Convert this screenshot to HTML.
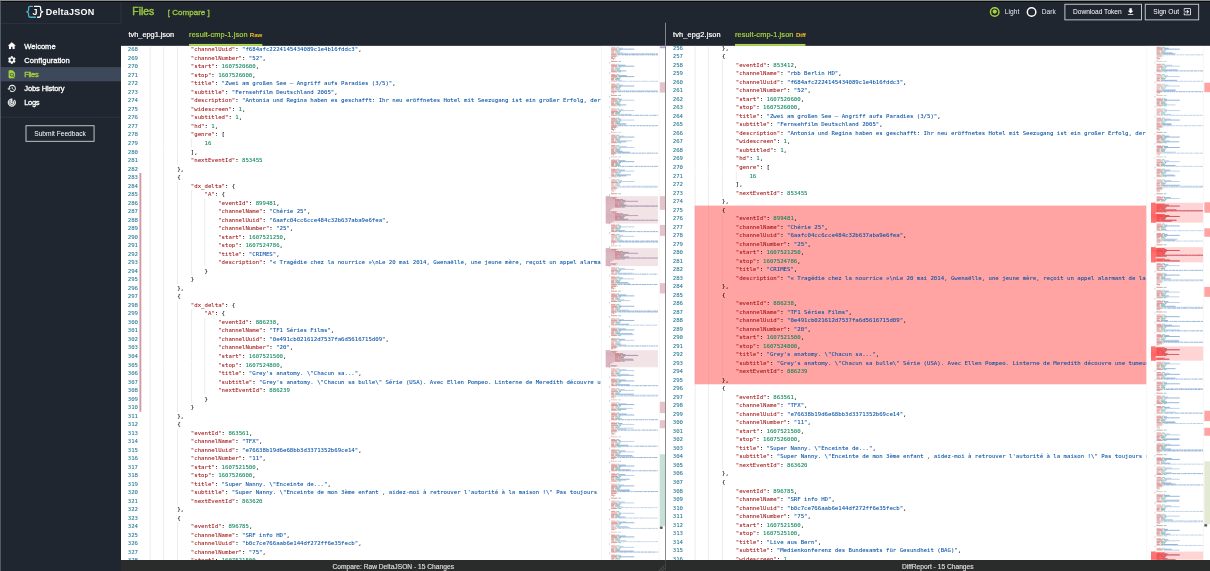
<!DOCTYPE html>
<html lang="en"><head><meta charset="utf-8"><title>DeltaJSON - Files</title>
<style>
*{box-sizing:border-box;margin:0;padding:0}
html,body{width:1210px;height:571px;overflow:hidden;background:#1f262f}
body{font-family:"Liberation Sans",Arial,sans-serif;color:#fff}
#root{position:absolute;left:0;top:0;width:2560px;height:1208px;transform:scale(0.47265625);transform-origin:0 0;filter:blur(.4px);background:#1f262f;overflow:hidden}
#root div,#root span,#root i,#root u,#root pre,#root svg{position:absolute}
.side{left:0;top:0;width:256px;height:1208px;background:#1f262f}
.shead{left:0;top:0;width:257px;height:51px;border-bottom:2px solid #2b3441;border-right:2px solid #2b3441}
.logo{left:54px;top:9px}
.brand{left:97px;top:13px;font-weight:bold;font-size:19px;letter-spacing:.55px;line-height:24px;white-space:nowrap}
.nav{left:0;width:256px;height:30px}
.nav.sel{background:#3d495a}
.nav .ic{left:15px;top:5px}
.nav span{left:51.3px;top:.5px;line-height:30px;font-size:16px;white-space:nowrap;-webkit-text-stroke:.6px #fff}
.nav.sel span{color:#a5d23e;-webkit-text-stroke:.6px #a5d23e}
.sdiv{left:0;top:247px;width:256px;height:2px;background:#2b3643}
.fb{left:54px;top:265px;width:146px;height:35px;border:2px solid #c9ccd0;font-size:14px;line-height:31px;text-align:center;color:#fff}
.title{left:280px;top:11px;font-size:22px;line-height:28px;color:#9cc842;-webkit-text-stroke:.85px #9cc842}
.cmp{left:355px;top:15px;font-size:17px;line-height:24px;color:#9cc842;white-space:nowrap;-webkit-text-stroke:.65px #9cc842}
.rad{width:21px;height:21px;border-radius:50%;border:3.3px solid #fff;top:14.5px}
.rad.on{border-color:#a5d23e}
.rad.on::after{content:"";position:absolute;left:2.7px;top:2.7px;width:9px;height:9px;border-radius:50%;background:#a5d23e}
.rl{top:14px;font-size:14px;line-height:22px;color:#e8eaed}
.btn{top:8px;height:35px;border:2px solid #c9ccd0;font-size:14px;line-height:31px;color:#fff;white-space:nowrap}
.btn span{top:0}
.tab{top:54px;font-size:15.5px;line-height:40px;white-space:nowrap;color:#fff;-webkit-text-stroke:.45px #fff}
.tab.act{letter-spacing:.3px;color:#a5d23e;-webkit-text-stroke:.45px #a5d23e}
.tag{top:53.5px;font-size:13px;letter-spacing:-.2px;font-weight:bold;line-height:40px;color:#f2bf2a}
.ul{top:93px;height:4px;background:#aad946}
.ed{top:97px;height:1088px;width:1152px;background:#fff;overflow:hidden}
.code{left:0;top:0;height:1088px;overflow:hidden}
.ln{left:0;height:18px;width:2000px}
.ln u{left:0;top:0;width:36px;text-align:right;text-decoration:none;color:#237893;font:12px/18px "DejaVu Sans Mono","Liberation Mono",monospace}
.ln pre{left:61px;top:0;font:12px/18px "DejaVu Sans Mono","Liberation Mono",monospace;color:#000;white-space:pre}
.ln i{top:0;width:1px;height:18px;background:#d8d8d8}
.redbg{left:61px;width:2000px;background:#ffa3a3}
.ln.rd i{background:#e89a9a}
.ln b{font-weight:normal;-webkit-text-stroke:.13px currentColor}
.ln pre,.ln u{-webkit-text-stroke:.13px currentColor}
.k{color:#a31515}.s{color:#0451a5}.n{color:#098658}
.bar{left:39px;width:4px;background:#cf9aa6}
.mm{top:0;width:111px;height:1088px;background:#fff}
.gap{top:0;width:10px;height:1088px;background:#fff;border-left:1px solid #ececec}
.rul{top:0;width:14px;height:1088px;background:#fff;border-left:1px solid #ededed}
.rul i{left:1px;width:13px}
.rul i.sq{left:1px;width:6px;height:5px;background:#5a5a5a}
.split{left:1407px;top:48px;width:2px;height:1160px;background:#8a8a8a}
.foot{top:1185px;height:23px;background:#2b2b2b;color:#e2e2e2;font-size:14.1px;line-height:26px;text-align:center;-webkit-text-stroke:.25px #e2e2e2}
.topg{left:0;top:0;width:2560px;height:2px;background:#9a9a9a}
.topb{left:0;top:2px;width:2560px;height:2px;background:#06080b}
.leftg{left:0;top:2px;width:2px;height:1206px;background:#565d6b}
</style></head>
<body>
<div id="root">
<div class="side">
 <div class="shead"><svg class=logo width="40" height="32" viewBox="0 0 40 32">
<path d="M14.5 4.5H9.5Q6.5 4.5 6.5 7.5V12.2Q6.5 14.8 2.6 16Q6.5 17.2 6.5 19.8V24.5Q6.5 27.5 9.5 27.5H21" fill="none" stroke="#4fb6c6" stroke-width="2.7" stroke-linejoin="round" stroke-linecap="round"/>
<path d="M19 4.5H29Q32 4.5 32 7.5V12.2Q32 14.8 36.4 16Q32 17.2 32 19.8V24.5Q32 27.5 29 27.5H25.5" fill="none" stroke="#fff" stroke-width="2.7" stroke-linejoin="round" stroke-linecap="round"/>
<text x="20" y="23" text-anchor="middle" font-family="'Liberation Sans', sans-serif" font-weight="bold" font-size="19" fill="#fff">J</text>
</svg><span class="brand">DeltaJSON</span></div>
 <div class="nav" style="top:82px"><svg class=ic width="20" height="20" viewBox="0 0 24 24" style="stroke:#fff;stroke-width:.3"><path fill="#fff" d="M10 20v-6h4v6h5v-8h3L12 3 2 12h3v8z"/></svg><span style="letter-spacing:0px">Welcome</span></div>
<div class="nav" style="top:112px"><svg class=ic width="20" height="20" viewBox="0 0 24 24" style="stroke:#fff;stroke-width:.3"><path fill="#fff" d="M19.14 12.94c.04-.3.06-.61.06-.94 0-.32-.02-.64-.07-.94l2.03-1.58c.18-.14.23-.41.12-.61l-1.92-3.32c-.12-.22-.37-.29-.59-.22l-2.39.96c-.5-.38-1.03-.7-1.62-.94l-.36-2.54c-.04-.24-.24-.41-.48-.41h-3.84c-.24 0-.43.17-.47.41l-.36 2.54c-.59.24-1.13.57-1.62.94l-2.39-.96c-.22-.08-.47 0-.59.22L2.74 8.87c-.12.21-.08.47.12.61l2.03 1.58c-.05.3-.09.63-.09.94s.02.64.07.94l-2.03 1.58c-.18.14-.23.41-.12.61l1.92 3.32c.12.22.37.29.59.22l2.39-.96c.5.38 1.03.7 1.62.94l.36 2.54c.05.24.24.41.48.41h3.84c.24 0 .44-.17.47-.41l.36-2.54c.59-.24 1.13-.56 1.62-.94l2.39.96c.22.08.47 0 .59-.22l1.92-3.32c.12-.22.07-.47-.12-.61l-2.01-1.58zM12 15.6c-1.98 0-3.6-1.62-3.6-3.6s1.62-3.6 3.6-3.6 3.6 1.62 3.6 3.6-1.62 3.6-3.6 3.6z"/></svg><span style="letter-spacing:0.1px">Configuration</span></div>
<div class="nav sel" style="top:142px"><svg class=ic width="20" height="20" viewBox="0 0 24 24" style="stroke:#a5d23e;stroke-width:.3"><path fill="#a5d23e" d="M20 19.59V8l-6-6H6c-1.1 0-1.99.9-1.99 2L4 20c0 1.1.89 2 1.99 2H18c.45 0 .85-.15 1.19-.4l-4.43-4.43c-.8.52-1.74.83-2.76.83-2.76 0-5-2.24-5-5s2.24-5 5-5 5 2.24 5 5c0 1.02-.31 1.96-.83 2.75L20 19.59zM9 13c0 1.66 1.34 3 3 3s3-1.34 3-3-1.34-3-3-3-3 1.34-3 3z"/></svg><span style="letter-spacing:-0.8px">Files</span></div>
<div class="nav" style="top:172px"><svg class=ic width="20" height="20" viewBox="0 0 24 24" style="stroke:#fff;stroke-width:.3"><path fill="#fff" d="M13 3c-4.97 0-9 4.03-9 9H1l3.89 3.89.07.14L9 12H6c0-3.87 3.13-7 7-7s7 3.13 7 7-3.13 7-7 7c-1.93 0-3.68-.79-4.94-2.06l-1.42 1.42C8.27 19.99 10.51 21 13 21c4.97 0 9-4.03 9-9s-4.03-9-9-9zm-1 5v5l4.28 2.54.72-1.21-3.5-2.08V8H12z"/></svg><span style="letter-spacing:-0.26px">Jobs History</span></div>
<div class="nav" style="top:202px"><svg class=ic width="20" height="20" viewBox="0 0 24 24" style="stroke:#fff;stroke-width:.9"><path fill="#fff" d="M19.07 4.93l-1.41 1.41C19.1 7.79 20 9.79 20 12c0 4.42-3.58 8-8 8s-8-3.58-8-8c0-4.08 3.05-7.44 7-7.93v2.02C8.16 6.57 6 9.03 6 12c0 3.31 2.69 6 6 6s6-2.69 6-6c0-1.66-.67-3.16-1.76-4.24l-1.41 1.41C15.55 9.9 16 10.9 16 12c0 2.21-1.79 4-4 4s-4-1.79-4-4c0-1.86 1.28-3.41 3-3.86v2.14c-.6.35-1 .98-1 1.72 0 1.1.9 2 2 2s2-.9 2-2c0-.74-.4-1.38-1-1.72V2h-1C6.48 2 2 6.48 2 12s4.48 10 10 10 10-4.48 10-10c0-2.76-1.12-5.26-2.93-7.07z"/></svg><span style="letter-spacing:-0.8px">Logs</span></div>

 <div class="sdiv"></div>
 <div class="fb">Submit Feedback</div>
</div>
<span class="title">Files</span><span class="cmp">[ Compare ]</span>
<span class="rad on" style="left:2094px"></span><span class="rl" style="left:2126px">Light</span>
<span class="rad" style="left:2172px"></span><span class="rl" style="left:2204px">Dark</span>
<div class="btn" style="left:2252px;width:164px"><span style="left:16px">Download Token</span><svg class=ic width="20" height="20" viewBox="0 0 24 24" style="left:128px;top:5px"><path fill="#fff" d="M19 9h-4V3H9v6H5l7 7 7-7zM5 18v2h14v-2H5z"/></svg></div>
<div class="btn" style="left:2422px;width:115px"><span style="left:16px">Sign Out</span><svg class=ic width="20" height="20" viewBox="0 0 24 24" style="left:78px;top:5px"><path fill="#fff" d="M10.09 15.59L11.5 17l5-5-5-5-1.41 1.41L12.67 11H3v2h9.67l-2.58 2.59zM19 3H5c-1.11 0-2 .9-2 2v4h2V5h14v14H5v-4H3v4c0 1.1.89 2 2 2h14c1.1 0 2-.9 2-2V5c0-1.1-.9-2-2-2z"/></svg></div>

<span class="tab" style="left:272px">tvh_epg1.json</span>
<span class="tab act" style="left:400px">result-cmp-1.json</span><span class="tag" style="left:528.5px">Raw</span>
<div class="ul" style="left:400px;width:155px"></div>
<span class="tab" style="left:1424px;letter-spacing:.35px">tvh_epg2.json</span>
<span class="tab act" style="left:1555px">result-cmp-1.json</span><span class="tag" style="left:1684px">Diff</span>
<div class="ul" style="left:1555px;width:149px"></div>

<div class="ed" style="left:256px">
 <div class="code" style="width:1016px">
 <div class="bar" style="top:268.6px;height:505.1px"></div>
<div class="ln" style="top:-2.0px"><u>268</u><i style="left:61.0px"></i><i style="left:89.9px"></i><i style="left:118.8px"></i><pre>            <b class=k>"channelUuid"</b>: <b class=s>"f684afc2224145434089c1e4b16fddc3"</b>,</pre></div>
<div class="ln" style="top:16.0px"><u>269</u><i style="left:61.0px"></i><i style="left:89.9px"></i><i style="left:118.8px"></i><pre>            <b class=k>"channelNumber"</b>: <b class=s>"52"</b>,</pre></div>
<div class="ln" style="top:34.1px"><u>270</u><i style="left:61.0px"></i><i style="left:89.9px"></i><i style="left:118.8px"></i><pre>            <b class=k>"start"</b>: <b class=n>1607520600</b>,</pre></div>
<div class="ln" style="top:52.1px"><u>271</u><i style="left:61.0px"></i><i style="left:89.9px"></i><i style="left:118.8px"></i><pre>            <b class=k>"stop"</b>: <b class=n>1607526000</b>,</pre></div>
<div class="ln" style="top:70.2px"><u>272</u><i style="left:61.0px"></i><i style="left:89.9px"></i><i style="left:118.8px"></i><pre>            <b class=k>"title"</b>: <b class=s>"Zwei am großen See – Angriff aufs Paradies (3/5)"</b>,</pre></div>
<div class="ln" style="top:88.2px"><u>273</u><i style="left:61.0px"></i><i style="left:89.9px"></i><i style="left:118.8px"></i><pre>            <b class=k>"subtitle"</b>: <b class=s>"Fernsehfilm Deutschland 2005"</b>,</pre></div>
<div class="ln" style="top:106.2px"><u>274</u><i style="left:61.0px"></i><i style="left:89.9px"></i><i style="left:118.8px"></i><pre>            <b class=k>"description"</b>: <b class=s>"Antonia und Regina haben es geschafft: Ihr neu eröffnetes Hotel mit Seezugang ist ein großer Erfolg, der ganze Ort</b></pre></div>
<div class="ln" style="top:124.3px"><u>275</u><i style="left:61.0px"></i><i style="left:89.9px"></i><i style="left:118.8px"></i><pre>            <b class=k>"widescreen"</b>: <b class=n>1</b>,</pre></div>
<div class="ln" style="top:142.3px"><u>276</u><i style="left:61.0px"></i><i style="left:89.9px"></i><i style="left:118.8px"></i><pre>            <b class=k>"subtitled"</b>: <b class=n>1</b>,</pre></div>
<div class="ln" style="top:160.4px"><u>277</u><i style="left:61.0px"></i><i style="left:89.9px"></i><i style="left:118.8px"></i><pre>            <b class=k>"hd"</b>: <b class=n>1</b>,</pre></div>
<div class="ln" style="top:178.4px"><u>278</u><i style="left:61.0px"></i><i style="left:89.9px"></i><i style="left:118.8px"></i><pre>            <b class=k>"genre"</b>: [</pre></div>
<div class="ln" style="top:196.4px"><u>279</u><i style="left:61.0px"></i><i style="left:89.9px"></i><i style="left:118.8px"></i><i style="left:147.7px"></i><pre>                <b class=n>16</b></pre></div>
<div class="ln" style="top:214.5px"><u>280</u><i style="left:61.0px"></i><i style="left:89.9px"></i><i style="left:118.8px"></i><pre>            ],</pre></div>
<div class="ln" style="top:232.5px"><u>281</u><i style="left:61.0px"></i><i style="left:89.9px"></i><i style="left:118.8px"></i><pre>            <b class=k>"nextEventId"</b>: <b class=n>853455</b></pre></div>
<div class="ln" style="top:250.6px"><u>282</u><i style="left:61.0px"></i><i style="left:89.9px"></i><pre>        },</pre></div>
<div class="ln" style="top:268.6px"><u>283</u><i style="left:61.0px"></i><i style="left:89.9px"></i><pre>        {</pre></div>
<div class="ln" style="top:286.6px"><u>284</u><i style="left:61.0px"></i><i style="left:89.9px"></i><i style="left:118.8px"></i><pre>            <b class=k>"dx_delta"</b>: {</pre></div>
<div class="ln" style="top:304.7px"><u>285</u><i style="left:61.0px"></i><i style="left:89.9px"></i><i style="left:118.8px"></i><i style="left:147.7px"></i><pre>                <b class=k>"A"</b>: {</pre></div>
<div class="ln" style="top:322.7px"><u>286</u><i style="left:61.0px"></i><i style="left:89.9px"></i><i style="left:118.8px"></i><i style="left:147.7px"></i><i style="left:176.6px"></i><pre>                    <b class=k>"eventId"</b>: <b class=n>899481</b>,</pre></div>
<div class="ln" style="top:340.8px"><u>287</u><i style="left:61.0px"></i><i style="left:89.9px"></i><i style="left:118.8px"></i><i style="left:147.7px"></i><i style="left:176.6px"></i><pre>                    <b class=k>"channelName"</b>: <b class=s>"Chérie 25"</b>,</pre></div>
<div class="ln" style="top:358.8px"><u>288</u><i style="left:61.0px"></i><i style="left:89.9px"></i><i style="left:118.8px"></i><i style="left:147.7px"></i><i style="left:176.6px"></i><pre>                    <b class=k>"channelUuid"</b>: <b class=s>"6aafc04cc6cce484c32b637aba9e6fea"</b>,</pre></div>
<div class="ln" style="top:376.8px"><u>289</u><i style="left:61.0px"></i><i style="left:89.9px"></i><i style="left:118.8px"></i><i style="left:147.7px"></i><i style="left:176.6px"></i><pre>                    <b class=k>"channelNumber"</b>: <b class=s>"25"</b>,</pre></div>
<div class="ln" style="top:394.9px"><u>290</u><i style="left:61.0px"></i><i style="left:89.9px"></i><i style="left:118.8px"></i><i style="left:147.7px"></i><i style="left:176.6px"></i><pre>                    <b class=k>"start"</b>: <b class=n>1607521250</b>,</pre></div>
<div class="ln" style="top:412.9px"><u>291</u><i style="left:61.0px"></i><i style="left:89.9px"></i><i style="left:118.8px"></i><i style="left:147.7px"></i><i style="left:176.6px"></i><pre>                    <b class=k>"stop"</b>: <b class=n>1607524786</b>,</pre></div>
<div class="ln" style="top:431.0px"><u>292</u><i style="left:61.0px"></i><i style="left:89.9px"></i><i style="left:118.8px"></i><i style="left:147.7px"></i><i style="left:176.6px"></i><pre>                    <b class=k>"title"</b>: <b class=s>"CRIMES"</b>,</pre></div>
<div class="ln" style="top:449.0px"><u>293</u><i style="left:61.0px"></i><i style="left:89.9px"></i><i style="left:118.8px"></i><i style="left:147.7px"></i><i style="left:176.6px"></i><pre>                    <b class=k>"description"</b>: <b class=s>"« Tragédie chez la nourrice »\nLe 20 mai 2014, Gwenaëlle, une jeune mère, reçoit un appel alarmant de la nourrice</b></pre></div>
<div class="ln" style="top:467.0px"><u>294</u><i style="left:61.0px"></i><i style="left:89.9px"></i><i style="left:118.8px"></i><i style="left:147.7px"></i><pre>                }</pre></div>
<div class="ln" style="top:485.1px"><u>295</u><i style="left:61.0px"></i><i style="left:89.9px"></i><i style="left:118.8px"></i><pre>            }</pre></div>
<div class="ln" style="top:503.1px"><u>296</u><i style="left:61.0px"></i><i style="left:89.9px"></i><pre>        },</pre></div>
<div class="ln" style="top:521.2px"><u>297</u><i style="left:61.0px"></i><i style="left:89.9px"></i><pre>        {</pre></div>
<div class="ln" style="top:539.2px"><u>298</u><i style="left:61.0px"></i><i style="left:89.9px"></i><i style="left:118.8px"></i><pre>            <b class=k>"dx_delta"</b>: {</pre></div>
<div class="ln" style="top:557.2px"><u>299</u><i style="left:61.0px"></i><i style="left:89.9px"></i><i style="left:118.8px"></i><i style="left:147.7px"></i><pre>                <b class=k>"A"</b>: {</pre></div>
<div class="ln" style="top:575.3px"><u>300</u><i style="left:61.0px"></i><i style="left:89.9px"></i><i style="left:118.8px"></i><i style="left:147.7px"></i><i style="left:176.6px"></i><pre>                    <b class=k>"eventId"</b>: <b class=n>886238</b>,</pre></div>
<div class="ln" style="top:593.3px"><u>301</u><i style="left:61.0px"></i><i style="left:89.9px"></i><i style="left:118.8px"></i><i style="left:147.7px"></i><i style="left:176.6px"></i><pre>                    <b class=k>"channelName"</b>: <b class=s>"TF1 Séries Films"</b>,</pre></div>
<div class="ln" style="top:611.4px"><u>302</u><i style="left:61.0px"></i><i style="left:89.9px"></i><i style="left:118.8px"></i><i style="left:147.7px"></i><i style="left:176.6px"></i><pre>                    <b class=k>"channelUuid"</b>: <b class=s>"0e491cb021612d7537fa6d5616715d09"</b>,</pre></div>
<div class="ln" style="top:629.4px"><u>303</u><i style="left:61.0px"></i><i style="left:89.9px"></i><i style="left:118.8px"></i><i style="left:147.7px"></i><i style="left:176.6px"></i><pre>                    <b class=k>"channelNumber"</b>: <b class=s>"20"</b>,</pre></div>
<div class="ln" style="top:647.4px"><u>304</u><i style="left:61.0px"></i><i style="left:89.9px"></i><i style="left:118.8px"></i><i style="left:147.7px"></i><i style="left:176.6px"></i><pre>                    <b class=k>"start"</b>: <b class=n>1607521500</b>,</pre></div>
<div class="ln" style="top:665.5px"><u>305</u><i style="left:61.0px"></i><i style="left:89.9px"></i><i style="left:118.8px"></i><i style="left:147.7px"></i><i style="left:176.6px"></i><pre>                    <b class=k>"stop"</b>: <b class=n>1607524800</b>,</pre></div>
<div class="ln" style="top:683.5px"><u>306</u><i style="left:61.0px"></i><i style="left:89.9px"></i><i style="left:118.8px"></i><i style="left:147.7px"></i><i style="left:176.6px"></i><pre>                    <b class=k>"title"</b>: <b class=s>"Grey's anatomy. \"Chacun sa..."</b>,</pre></div>
<div class="ln" style="top:701.6px"><u>307</u><i style="left:61.0px"></i><i style="left:89.9px"></i><i style="left:118.8px"></i><i style="left:147.7px"></i><i style="left:176.6px"></i><pre>                    <b class=k>"subtitle"</b>: <b class=s>"Grey's anatomy. \"Chacun sa bulle\" Série (USA). Avec Ellen Pompeo. Linterne de Meredith découvre une tumeur</b></pre></div>
<div class="ln" style="top:719.6px"><u>308</u><i style="left:61.0px"></i><i style="left:89.9px"></i><i style="left:118.8px"></i><i style="left:147.7px"></i><i style="left:176.6px"></i><pre>                    <b class=k>"nextEventId"</b>: <b class=n>886239</b></pre></div>
<div class="ln" style="top:737.6px"><u>309</u><i style="left:61.0px"></i><i style="left:89.9px"></i><i style="left:118.8px"></i><i style="left:147.7px"></i><pre>                }</pre></div>
<div class="ln" style="top:755.7px"><u>310</u><i style="left:61.0px"></i><i style="left:89.9px"></i><i style="left:118.8px"></i><pre>            }</pre></div>
<div class="ln" style="top:773.7px"><u>311</u><i style="left:61.0px"></i><i style="left:89.9px"></i><pre>        },</pre></div>
<div class="ln" style="top:791.8px"><u>312</u><i style="left:61.0px"></i><i style="left:89.9px"></i><pre>        {</pre></div>
<div class="ln" style="top:809.8px"><u>313</u><i style="left:61.0px"></i><i style="left:89.9px"></i><i style="left:118.8px"></i><pre>            <b class=k>"eventId"</b>: <b class=n>863561</b>,</pre></div>
<div class="ln" style="top:827.8px"><u>314</u><i style="left:61.0px"></i><i style="left:89.9px"></i><i style="left:118.8px"></i><pre>            <b class=k>"channelName"</b>: <b class=s>"TFX"</b>,</pre></div>
<div class="ln" style="top:845.9px"><u>315</u><i style="left:61.0px"></i><i style="left:89.9px"></i><i style="left:118.8px"></i><pre>            <b class=k>"channelUuid"</b>: <b class=s>"e76638b19d6e68bb3d3371352b69ce14"</b>,</pre></div>
<div class="ln" style="top:863.9px"><u>316</u><i style="left:61.0px"></i><i style="left:89.9px"></i><i style="left:118.8px"></i><pre>            <b class=k>"channelNumber"</b>: <b class=s>"11"</b>,</pre></div>
<div class="ln" style="top:882.0px"><u>317</u><i style="left:61.0px"></i><i style="left:89.9px"></i><i style="left:118.8px"></i><pre>            <b class=k>"start"</b>: <b class=n>1607521500</b>,</pre></div>
<div class="ln" style="top:900.0px"><u>318</u><i style="left:61.0px"></i><i style="left:89.9px"></i><i style="left:118.8px"></i><pre>            <b class=k>"stop"</b>: <b class=n>1607526000</b>,</pre></div>
<div class="ln" style="top:918.0px"><u>319</u><i style="left:61.0px"></i><i style="left:89.9px"></i><i style="left:118.8px"></i><pre>            <b class=k>"title"</b>: <b class=s>"Super Nanny. \"Enceinte de..."</b>,</pre></div>
<div class="ln" style="top:936.1px"><u>320</u><i style="left:61.0px"></i><i style="left:89.9px"></i><i style="left:118.8px"></i><pre>            <b class=k>"subtitle"</b>: <b class=s>"Super Nanny. \"Enceinte de mon 3ème enfant , aidez-moi à retrouver l'autorité à la maison !\" Pas toujours simple</b></pre></div>
<div class="ln" style="top:954.1px"><u>321</u><i style="left:61.0px"></i><i style="left:89.9px"></i><i style="left:118.8px"></i><pre>            <b class=k>"nextEventId"</b>: <b class=n>863620</b></pre></div>
<div class="ln" style="top:972.2px"><u>322</u><i style="left:61.0px"></i><i style="left:89.9px"></i><pre>        },</pre></div>
<div class="ln" style="top:990.2px"><u>323</u><i style="left:61.0px"></i><i style="left:89.9px"></i><pre>        {</pre></div>
<div class="ln" style="top:1008.2px"><u>324</u><i style="left:61.0px"></i><i style="left:89.9px"></i><i style="left:118.8px"></i><pre>            <b class=k>"eventId"</b>: <b class=n>896785</b>,</pre></div>
<div class="ln" style="top:1026.3px"><u>325</u><i style="left:61.0px"></i><i style="left:89.9px"></i><i style="left:118.8px"></i><pre>            <b class=k>"channelName"</b>: <b class=s>"SRF info HD"</b>,</pre></div>
<div class="ln" style="top:1044.3px"><u>326</u><i style="left:61.0px"></i><i style="left:89.9px"></i><i style="left:118.8px"></i><pre>            <b class=k>"channelUuid"</b>: <b class=s>"b0c7ce766aab6e144df272ff6e35fecb"</b>,</pre></div>
<div class="ln" style="top:1062.4px"><u>327</u><i style="left:61.0px"></i><i style="left:89.9px"></i><i style="left:118.8px"></i><pre>            <b class=k>"channelNumber"</b>: <b class=s>"75"</b>,</pre></div>
<div class="ln" style="top:1080.4px"><u>328</u><i style="left:61.0px"></i><i style="left:89.9px"></i><i style="left:118.8px"></i><pre>            <b class=k>"start"</b>: <b class=n>1607521500</b>,</pre></div>
 </div>
 <div class="gap" style="left:1016px"></div>
 <div class="mm" style="left:1025px"><svg width="111" height="1087" viewBox="0 0 111 1087"><rect x="0" y="318" width="111" height="58" fill="#f1e3e6"/><rect x="0" y="428" width="111" height="38" fill="#f1e3e6"/><rect x="0" y="644" width="111" height="36" fill="#f1e3e6"/><path d="M12 7h13M12 11h7M12 17h10M12 19h13M12 23h11M12 25h4M12 27h7M12 33h13M12 41h13M12 43h13M12 49h6M12 53h10M12 55h13M12 61h9M12 63h13M12 65h13M12 69h7M12 71h6M12 81h9M12 85h13M12 87h15M12 89h7M12 97h13M12 105h13M12 111h9M12 113h13M12 117h15M12 121h6M12 123h7M12 125h10M12 139h15M12 141h7M12 143h6M12 147h13M12 153h9M12 155h13M12 159h15M12 161h7M12 163h6M12 165h7M12 169h13M12 171h12M12 173h11M12 175h4M12 177h7M12 189h9M12 193h13M12 197h7M12 199h6M12 203h10M12 205h13M12 211h9M12 219h7M12 221h6M12 223h7M12 225h10M12 227h13M12 229h7M12 243h13M12 245h13M12 247h15M12 249h7M12 251h6M12 253h7M12 255h13M12 261h9M12 263h13M12 267h15M12 273h7M12 275h10M12 289h15M12 301h12M12 313h13M16 323h3M20 325h9M20 327h13M20 335h6M20 337h7M20 339h10M20 341h13M16 353h3M20 355h9M20 361h15M20 363h7M20 365h6M20 367h7M12 379h9M12 381h13M12 385h15M12 387h7M12 391h7M12 393h13M12 399h9M12 413h10M12 415h13M12 431h10M20 435h9M20 437h13M20 441h15M20 443h7M20 447h7M12 475h15M12 477h7M12 483h13M12 489h9M12 491h13M12 497h7M12 499h6M12 501h7M12 505h13M12 509h11M12 511h4M12 513h7M12 519h13M12 525h9M12 527h13M12 529h13M12 531h15M12 535h6M12 541h13M12 547h9M12 551h13M12 553h15M12 557h6M12 561h10M12 563h13M12 565h7M12 571h13M12 581h13M12 585h7M12 589h7M12 599h13M12 601h13M12 603h15M12 607h6M12 609h7M12 613h13M12 621h13M12 631h7M12 635h13M12 637h12M12 639h11M12 641h4M12 647h10M20 651h9M20 653h13M20 655h13M20 659h7M20 667h13M12 677h10M12 693h6M12 697h10M12 705h9M12 707h13M12 709h13M12 711h15M12 717h7M12 719h13M12 731h15M12 735h6M12 737h7M12 743h7M12 759h13M12 761h15M12 769h10M12 771h13M12 777h9M12 779h13M12 781h13M12 785h7M12 789h7M12 791h13M12 799h13M12 803h15M12 807h6M12 813h13M12 815h12M12 821h7M12 833h9M12 835h13M12 843h6M12 845h7M12 847h10M12 855h9M12 857h13M12 861h15M12 865h6M12 867h7M12 871h13M12 873h7M12 887h13M12 889h13M12 891h15M12 893h7M12 895h6M12 897h7M12 899h13M12 907h13M12 911h15M12 913h7M12 917h7M12 921h13M12 931h13M12 933h15M12 935h7M12 937h6M12 941h10M12 943h13M12 947h11M12 951h7M12 957h13M12 969h15M12 971h7M12 973h6M12 979h13M12 985h9M12 991h15M12 993h7M12 995h6M12 997h7M12 1009h13M12 1011h15M12 1023h7M12 1035h9M12 1037h13M12 1039h13M12 1041h15M12 1045h6M12 1051h13M12 1065h7M12 1067h6M12 1069h7M12 1071h13M12 1079h13M12 1081h13M12 1085h7" stroke="#b83c3c" stroke-width="1.05" stroke-opacity="1.00" fill="none"/><path d="M12 3h9M12 5h13M12 9h15M12 13h6M12 15h7M12 21h12M12 39h9M12 45h15M12 47h7M12 51h7M12 67h15M12 73h7M12 75h13M12 83h13M12 91h6M12 93h7M12 95h10M12 99h7M12 115h13M12 119h7M12 127h13M12 133h9M12 135h13M12 137h13M12 145h7M12 157h13M12 167h10M12 183h13M12 191h13M12 195h15M12 201h7M12 213h13M12 215h13M12 217h15M12 235h13M12 241h9M12 265h13M12 269h7M12 271h6M12 277h13M12 283h9M12 285h13M12 287h13M12 291h7M12 293h6M12 295h7M12 297h10M12 299h13M12 303h11M12 305h4M12 307h7M12 321h10M20 329h13M20 331h15M20 333h7M12 351h10M20 357h13M20 359h13M20 369h13M12 383h13M12 389h6M12 401h13M12 403h13M12 405h15M12 407h7M12 409h6M12 411h7M12 417h7M12 423h13M16 433h3M20 439h13M20 445h6M20 449h10M20 451h13M12 461h10M16 463h3M12 469h9M12 471h13M12 473h13M12 479h6M12 481h7M12 493h13M12 495h15M12 503h10M12 507h12M12 533h7M12 537h7M12 539h10M12 549h13M12 555h7M12 559h7M12 577h9M12 579h13M12 583h15M12 587h6M12 591h13M12 597h9M12 605h7M12 611h10M12 619h9M12 623h13M12 625h15M12 627h7M12 629h6M12 633h10M16 649h3M20 657h15M20 661h6M20 663h7M20 665h10M12 683h9M12 685h13M12 687h13M12 689h15M12 691h7M12 695h7M12 699h13M12 713h7M12 715h6M12 725h9M12 727h13M12 729h13M12 733h7M12 739h10M12 741h13M12 749h13M12 755h9M12 757h13M12 763h7M12 765h6M12 767h7M12 783h15M12 787h6M12 797h9M12 801h13M12 805h7M12 809h7M12 811h10M12 817h11M12 819h4M12 827h13M12 837h13M12 839h15M12 841h7M12 849h13M12 859h13M12 863h7M12 869h10M12 879h13M12 885h9M12 905h9M12 909h13M12 915h6M12 919h10M12 927h9M12 929h13M12 939h7M12 945h12M12 949h4M12 963h9M12 965h13M12 967h13M12 975h7M12 977h10M12 987h13M12 989h13M12 999h13M12 1005h9M12 1007h13M12 1013h7M12 1015h6M12 1017h7M12 1019h10M12 1021h13M12 1029h13M12 1043h7M12 1047h7M12 1049h10M12 1057h9M12 1059h13M12 1061h13M12 1063h15M12 1077h9M12 1083h15M12 1087h6" stroke="#b83c3c" stroke-width="1.05" stroke-opacity="0.61" fill="none"/><path d="M27 7h34M24 17h8M33 17h5M39 17h9M49 17h4M54 17h8M63 17h7M71 17h3M75 17h8M84 17h9M94 17h8M103 17h3M107 17h4M27 19h4M32 19h2M35 19h4M40 19h9M50 19h4M55 19h9M65 19h7M73 19h4M78 19h4M83 19h2M86 19h2M89 19h3M93 19h4M98 19h8M107 19h4M27 41h15M27 43h34M24 53h20M27 63h18M27 65h34M27 85h34M29 87h4M27 97h6M34 97h3M38 97h4M43 97h7M51 97h4M56 97h6M63 97h4M68 97h9M78 97h5M84 97h3M88 97h8M97 97h9M107 97h4M27 113h8M29 117h4M21 123h10M24 125h20M29 139h4M27 147h4M32 147h8M41 147h6M48 147h8M57 147h4M62 147h9M72 147h7M80 147h3M84 147h6M91 147h2M94 147h4M99 147h8M108 147h3M27 155h6M29 159h4M21 165h23M27 169h6M34 169h4M39 169h2M42 169h5M48 169h3M52 169h4M57 169h6M64 169h2M67 169h4M72 169h5M78 169h6M85 169h6M92 169h5M98 169h6M105 169h6M27 193h34M24 203h20M21 223h15M24 225h28M27 227h6M34 227h8M43 227h4M48 227h2M51 227h3M55 227h8M64 227h6M71 227h5M77 227h6M84 227h2M87 227h9M97 227h4M102 227h4M107 227h4M27 243h15M27 245h34M29 247h4M21 253h11M27 255h2M30 255h3M34 255h6M41 255h3M45 255h4M50 255h8M59 255h2M62 255h8M71 255h2M74 255h6M81 255h6M88 255h5M94 255h3M98 255h4M103 255h8M27 263h14M29 267h4M21 273h33M24 275h20M29 289h4M35 327h7M29 337h15M32 339h9M42 339h3M46 339h5M52 339h6M59 339h3M63 339h9M73 339h2M76 339h6M83 339h9M93 339h3M97 339h9M107 339h4M37 361h4M29 367h19M27 381h6M29 385h4M21 391h20M27 393h8M36 393h3M40 393h7M48 393h8M57 393h6M64 393h2M67 393h6M74 393h3M78 393h2M81 393h6M88 393h4M93 393h5M99 393h6M106 393h5M24 413h3M28 413h2M31 413h8M40 413h9M50 413h4M55 413h6M62 413h9M72 413h2M75 413h4M80 413h4M85 413h9M95 413h8M104 413h7M27 415h6M34 415h6M41 415h8M50 415h5M56 415h6M63 415h9M73 415h8M82 415h3M86 415h4M91 415h4M96 415h3M100 415h5M106 415h5M35 437h14M37 441h4M29 447h21M29 475h4M27 483h9M37 483h9M47 483h5M53 483h3M57 483h5M63 483h4M68 483h4M73 483h3M77 483h9M87 483h3M91 483h2M94 483h2M97 483h4M102 483h5M108 483h2M27 491h10M21 501h27M27 505h5M33 505h2M36 505h2M39 505h6M46 505h9M56 505h6M63 505h7M71 505h5M77 505h9M87 505h5M93 505h5M99 505h2M102 505h8M27 527h17M27 529h34M29 531h4M27 551h34M29 553h4M24 561h4M29 561h5M35 561h9M45 561h8M54 561h2M57 561h4M62 561h8M71 561h2M74 561h5M80 561h2M83 561h4M88 561h8M97 561h2M100 561h2M103 561h4M108 561h3M27 563h7M35 563h3M39 563h3M43 563h4M48 563h7M56 563h5M62 563h4M67 563h9M77 563h2M80 563h6M87 563h8M96 563h7M104 563h7M27 581h34M21 589h29M27 599h16M27 601h34M29 603h4M21 609h36M27 621h14M21 631h12M27 635h9M37 635h8M46 635h6M53 635h8M62 635h9M72 635h4M77 635h9M87 635h4M92 635h2M95 635h6M102 635h4M107 635h4M35 653h7M35 655h34M24 697h36M27 707h16M27 709h34M29 711h4M21 717h30M27 719h5M33 719h5M39 719h3M43 719h9M53 719h2M56 719h3M60 719h2M63 719h9M73 719h5M79 719h9M89 719h7M97 719h2M100 719h6M107 719h4M29 731h4M21 737h39M27 759h34M29 761h4M24 769h20M27 779h18M27 781h34M21 789h13M27 791h4M32 791h8M41 791h3M45 791h7M53 791h4M58 791h4M63 791h7M71 791h6M78 791h4M83 791h4M88 791h3M92 791h3M96 791h8M105 791h6M27 799h9M29 803h4M27 813h4M32 813h5M38 813h8M47 813h5M53 813h9M63 813h4M68 813h5M74 813h2M77 813h8M86 813h4M91 813h8M100 813h7M108 813h3M27 835h5M21 845h27M24 847h7M32 847h9M42 847h9M52 847h4M57 847h2M60 847h2M63 847h9M73 847h9M83 847h5M89 847h9M99 847h9M109 847h2M27 857h15M29 861h4M21 867h36M27 871h3M31 871h2M34 871h8M43 871h4M48 871h2M51 871h3M55 871h3M59 871h5M65 871h4M70 871h9M80 871h6M87 871h4M92 871h5M98 871h3M102 871h7M110 871h1M27 887h16M27 889h34M29 891h4M21 897h32M27 899h6M34 899h7M42 899h8M51 899h4M56 899h6M63 899h3M67 899h2M70 899h7M78 899h9M88 899h3M92 899h6M99 899h8M108 899h3M27 907h15M29 911h4M21 917h30M27 931h34M29 933h4M24 941h28M27 943h2M30 943h4M35 943h9M45 943h5M51 943h2M54 943h2M57 943h2M60 943h2M63 943h7M71 943h6M78 943h3M82 943h7M90 943h5M96 943h8M105 943h6M29 969h4M29 991h4M21 997h21M27 1009h34M29 1011h4M27 1037h16M27 1039h34M29 1041h4M21 1069h39M27 1071h3M31 1071h6M38 1071h9M48 1071h3M52 1071h4M57 1071h3M61 1071h5M67 1071h6M74 1071h7M82 1071h7M90 1071h8M99 1071h6M106 1071h2M109 1071h2M27 1079h6M27 1081h34" stroke="#2f6bb5" stroke-width="1.05" stroke-opacity="1.00" fill="none"/><path d="M27 5h10M29 9h4M21 15h17M29 45h4M21 51h11M29 67h4M21 73h14M27 75h7M35 75h9M45 75h3M49 75h2M52 75h5M58 75h5M64 75h6M71 75h2M74 75h3M78 75h9M88 75h2M91 75h3M95 75h9M105 75h6M27 83h10M21 93h11M24 95h6M31 95h5M37 95h9M47 95h4M52 95h8M61 95h3M65 95h8M74 95h9M84 95h7M92 95h3M96 95h5M102 95h8M27 115h34M27 135h11M27 137h34M21 145h34M27 157h34M24 167h20M27 191h13M29 195h4M21 201h35M27 213h18M27 215h34M29 217h4M27 265h34M27 285h8M27 287h34M21 295h10M24 297h5M30 297h3M34 297h2M37 297h2M40 297h4M45 297h7M53 297h3M57 297h8M66 297h9M76 297h2M79 297h2M82 297h5M88 297h9M98 297h6M105 297h2M108 297h3M27 299h3M31 299h3M35 299h9M45 299h6M52 299h3M56 299h6M63 299h5M69 299h5M75 299h5M81 299h9M91 299h9M101 299h8M110 299h1M35 329h34M37 331h4M35 357h13M35 359h34M35 369h8M44 369h2M47 369h4M52 369h2M55 369h9M65 369h9M75 369h8M84 369h6M91 369h4M96 369h8M105 369h6M27 383h34M27 401h10M27 403h34M29 405h4M21 411h14M35 439h34M32 449h5M38 449h8M47 449h6M54 449h7M62 449h2M65 449h9M75 449h6M82 449h7M90 449h4M95 449h5M101 449h3M105 449h6M27 471h14M27 473h34M21 481h37M27 493h34M29 495h4M24 503h28M21 537h19M24 539h28M27 549h6M21 559h27M27 579h12M29 583h4M27 591h5M33 591h7M41 591h9M51 591h5M57 591h7M65 591h7M73 591h9M83 591h2M86 591h8M95 591h5M101 591h8M110 591h1M24 611h36M27 623h34M29 625h4M24 633h20M37 657h4M29 663h29M32 665h28M27 685h17M27 687h34M29 689h4M21 695h28M27 727h14M27 729h34M24 739h2M27 739h3M31 739h7M39 739h5M45 739h2M48 739h7M56 739h7M64 739h4M69 739h2M72 739h5M78 739h6M85 739h2M88 739h5M94 739h2M97 739h7M105 739h6M27 741h4M32 741h6M39 741h3M43 741h5M49 741h2M52 741h9M62 741h9M72 741h3M76 741h8M85 741h3M89 741h8M98 741h4M103 741h3M107 741h4M27 757h17M21 767h37M29 783h4M27 801h34M21 809h38M24 811h20M27 837h34M29 839h4M27 859h34M24 869h36M27 909h34M24 919h20M27 929h12M21 939h30M27 965h14M27 967h34M21 975h15M24 977h7M32 977h9M42 977h9M52 977h5M58 977h4M63 977h2M66 977h2M69 977h2M72 977h2M75 977h8M84 977h4M89 977h5M95 977h4M100 977h2M103 977h3M107 977h2M110 977h1M27 987h5M27 989h34M27 999h9M37 999h2M40 999h8M49 999h8M58 999h9M68 999h3M72 999h9M82 999h4M87 999h5M93 999h3M97 999h6M104 999h5M110 999h1M27 1007h17M21 1017h26M24 1019h28M27 1021h6M34 1021h5M40 1021h3M44 1021h2M47 1021h4M52 1021h6M59 1021h5M65 1021h5M71 1021h4M76 1021h7M84 1021h5M90 1021h8M99 1021h7M107 1021h4M21 1047h23M24 1049h8M33 1049h3M37 1049h4M42 1049h4M47 1049h2M50 1049h2M53 1049h3M57 1049h3M61 1049h4M66 1049h7M74 1049h4M79 1049h2M82 1049h2M85 1049h2M88 1049h4M93 1049h2M96 1049h3M100 1049h2M103 1049h3M107 1049h4M27 1059h11M27 1061h34M29 1063h4M29 1083h4" stroke="#2f6bb5" stroke-width="1.05" stroke-opacity="0.61" fill="none"/><path d="M21 11h10M25 23h1M18 25h1M16 29h2M27 33h6M20 49h10M27 55h6M23 61h6M21 69h10M20 71h10M23 81h6M21 89h10M27 105h6M23 111h6M20 121h10M21 141h10M20 143h10M23 153h6M21 161h10M20 163h10M26 171h1M25 173h1M18 175h1M16 179h2M23 189h6M21 197h10M20 199h10M27 205h6M23 211h6M21 219h10M20 221h10M16 231h2M21 249h10M20 251h10M23 261h6M26 301h1M27 313h6M31 325h6M28 335h10M35 341h6M31 355h6M29 363h10M28 365h10M23 379h6M21 387h10M23 399h6M16 419h2M31 435h6M29 443h10M21 477h10M23 489h6M21 497h10M20 499h10M25 509h1M18 511h1M27 519h6M23 525h6M20 535h10M27 541h6M23 547h6M20 557h10M16 567h2M27 571h6M21 585h10M20 607h10M27 613h6M26 637h1M25 639h1M18 641h1M31 651h6M29 659h10M35 667h6M20 693h10M23 705h6M20 735h10M16 745h2M27 771h6M23 777h6M21 785h10M20 807h10M26 815h1M23 833h6M20 843h10M23 855h6M20 865h10M21 893h10M20 895h10M21 913h10M27 921h6M21 935h10M20 937h10M25 947h1M16 953h2M27 957h6M21 971h10M20 973h10M27 979h6M23 985h6M21 993h10M20 995h10M23 1035h6M20 1045h10M27 1051h6M21 1065h10M20 1067h10M21 1085h10" stroke="#2f9a70" stroke-width="1.05" stroke-opacity="1.00" fill="none"/><path d="M23 3h6M20 13h10M26 21h1M23 39h6M21 47h10M20 91h10M16 101h2M21 119h10M27 127h6M23 133h6M27 183h6M27 235h6M23 241h6M21 269h10M20 271h10M27 277h6M23 283h6M21 291h10M20 293h10M25 303h1M18 305h1M16 309h2M29 333h10M20 389h10M21 407h10M20 409h10M27 423h6M28 445h10M35 451h6M23 469h6M20 479h10M26 507h1M16 515h2M21 533h10M21 555h10M23 577h6M20 587h10M23 597h6M21 605h10M23 619h6M21 627h10M20 629h10M28 661h10M23 683h6M21 691h10M27 699h6M21 713h10M20 715h10M23 725h6M21 733h10M27 749h6M23 755h6M21 763h10M20 765h10M20 787h10M23 797h6M21 805h10M25 817h1M18 819h1M16 823h2M27 827h6M21 841h10M27 849h6M21 863h10M16 875h2M27 879h6M23 885h6M23 905h6M20 915h10M23 927h6M26 945h1M18 949h1M23 963h6M23 1005h6M21 1013h10M20 1015h10M16 1025h2M27 1029h6M21 1043h10M23 1057h6M23 1077h6M20 1087h10" stroke="#2f9a70" stroke-width="1.05" stroke-opacity="0.65" fill="none"/><path d="M8 1h1M21 27h1M8 35h2M8 37h1M8 57h2M8 59h1M8 79h1M12 103h2M8 107h2M8 109h1M8 129h2M8 131h1M8 149h2M8 151h1M21 177h1M12 181h2M8 187h1M21 229h1M8 237h2M8 239h1M8 279h2M12 311h2M8 315h2M8 319h1M21 323h1M8 347h2M8 349h1M21 353h1M16 371h1M12 373h1M8 375h2M8 377h1M8 395h2M8 397h1M12 421h2M8 425h2M8 427h2M8 429h1M24 431h1M16 453h1M8 457h2M8 459h1M8 465h2M8 467h1M8 487h1M21 513h1M12 517h2M8 543h2M21 565h1M12 569h2M8 573h2M8 593h2M8 595h1M8 645h1M24 647h1M16 669h1M12 671h1M8 673h2M24 677h1M8 679h2M8 681h1M8 701h2M8 721h2M8 723h1M21 743h1M8 751h2M8 753h1M8 775h1M21 821h1M8 831h1M8 851h2M8 853h1M21 873h1M12 877h2M8 881h2M8 883h1M8 901h2M21 951h1M8 959h2M8 961h1M8 981h2M8 1001h2M21 1023h1M8 1033h1M8 1055h1M8 1073h2M8 1075h1" stroke="#666666" stroke-width="1.05" stroke-opacity="0.83" fill="none"/><path d="M12 31h2M8 77h2M21 99h1M8 185h2M8 207h2M8 209h1M12 233h2M8 257h2M8 259h1M8 281h1M21 307h1M8 317h2M24 321h1M16 343h1M12 345h1M24 351h1M21 417h1M21 433h1M12 455h1M24 461h1M21 463h1M8 485h2M8 521h2M8 523h1M8 545h1M8 575h1M8 615h2M8 617h1M8 643h2M21 649h1M8 675h1M8 703h1M12 747h2M8 773h2M8 793h2M8 795h1M12 825h2M8 829h2M8 903h1M8 923h2M8 925h1M12 955h2M8 983h1M8 1003h1M12 1027h2M8 1031h2M8 1053h2" stroke="#666666" stroke-width="1.05" stroke-opacity="0.50" fill="none"/><path d="M0 319h9M0 321h25M0 323h22M0 325h37M0 327h42M0 329h69M0 331h41M0 333h39M0 335h38M0 337h44M0 339h111M0 341h41M0 343h17M0 345h13M0 347h10M0 349h9M0 351h25M0 353h22M0 355h37M0 357h48M0 359h69M0 361h41M0 363h39M0 365h38M0 367h48M0 369h111M0 371h17M0 373h13M0 375h10M0 429h9M0 431h25M0 433h22M0 435h37M0 437h49M0 439h69M0 441h41M0 443h39M0 445h38M0 447h50M0 449h111M0 451h41M0 453h17M0 455h13M0 457h10M0 459h9M0 461h25M0 463h22M0 465h10M0 645h9M0 647h25M0 649h22M0 651h37M0 653h42M0 655h69M0 657h41M0 659h39M0 661h38M0 663h58M0 665h60M0 667h41M0 669h17M0 671h13M0 673h10M0 675h9M0 677h25M0 679h10" stroke="#c98e9b" stroke-width="2" stroke-opacity="0.62" fill="none"/></svg></div>
 <div class="rul" style="left:1138px"><i style="top:1.2px;height:3.4px;background:#b9a3d9"></i><i style="top:76.5px;height:22.2px;background:#e6c3ca"></i><i style="top:317.7px;height:29.6px;background:#e6c3ca"></i><i style="top:379.0px;height:23.3px;background:#e6c3ca"></i><i style="top:501.7px;height:22.2px;background:#e6c3ca"></i><i style="top:752.5px;height:24.3px;background:#e6c3ca"></i><i style="top:792.4px;height:16.9px;background:#e6c3ca"></i><i style="top:863.5px;height:152.3px;background:#c5e0d6"></i><i class="sq" style="top:1017.1px"></i></div>
</div>
<div class="ed" style="left:1409px;width:1151px">
 <div class="code" style="width:1017.4px">
<div class="ln" style="top:-4.7px"><u>256</u><i style="left:61.0px"></i><i style="left:89.9px"></i><pre>        },</pre></div>
<div class="ln" style="top:13.3px"><u>257</u><i style="left:61.0px"></i><i style="left:89.9px"></i><pre>        {</pre></div>
<div class="ln" style="top:31.3px"><u>258</u><i style="left:61.0px"></i><i style="left:89.9px"></i><i style="left:118.8px"></i><pre>            <b class=k>"eventId"</b>: <b class=n>853412</b>,</pre></div>
<div class="ln" style="top:49.3px"><u>259</u><i style="left:61.0px"></i><i style="left:89.9px"></i><i style="left:118.8px"></i><pre>            <b class=k>"channelName"</b>: <b class=s>"rbb Berlin HD"</b>,</pre></div>
<div class="ln" style="top:67.3px"><u>260</u><i style="left:61.0px"></i><i style="left:89.9px"></i><i style="left:118.8px"></i><pre>            <b class=k>"channelUuid"</b>: <b class=s>"f684afc2224145434089c1e4b16fddc3"</b>,</pre></div>
<div class="ln" style="top:85.4px"><u>261</u><i style="left:61.0px"></i><i style="left:89.9px"></i><i style="left:118.8px"></i><pre>            <b class=k>"channelNumber"</b>: <b class=s>"52"</b>,</pre></div>
<div class="ln" style="top:103.4px"><u>262</u><i style="left:61.0px"></i><i style="left:89.9px"></i><i style="left:118.8px"></i><pre>            <b class=k>"start"</b>: <b class=n>1607520600</b>,</pre></div>
<div class="ln" style="top:121.4px"><u>263</u><i style="left:61.0px"></i><i style="left:89.9px"></i><i style="left:118.8px"></i><pre>            <b class=k>"stop"</b>: <b class=n>1607526000</b>,</pre></div>
<div class="ln" style="top:139.4px"><u>264</u><i style="left:61.0px"></i><i style="left:89.9px"></i><i style="left:118.8px"></i><pre>            <b class=k>"title"</b>: <b class=s>"Zwei am großen See – Angriff aufs Paradies (3/5)"</b>,</pre></div>
<div class="ln" style="top:157.4px"><u>265</u><i style="left:61.0px"></i><i style="left:89.9px"></i><i style="left:118.8px"></i><pre>            <b class=k>"subtitle"</b>: <b class=s>"Fernsehfilm Deutschland 2005"</b>,</pre></div>
<div class="ln" style="top:175.4px"><u>266</u><i style="left:61.0px"></i><i style="left:89.9px"></i><i style="left:118.8px"></i><pre>            <b class=k>"description"</b>: <b class=s>"Antonia und Regina haben es geschafft: Ihr neu eröffnetes Hotel mit Seezugang ist ein großer Erfolg, der ganze Ort</b></pre></div>
<div class="ln" style="top:193.4px"><u>267</u><i style="left:61.0px"></i><i style="left:89.9px"></i><i style="left:118.8px"></i><pre>            <b class=k>"widescreen"</b>: <b class=n>1</b>,</pre></div>
<div class="ln" style="top:211.4px"><u>268</u><i style="left:61.0px"></i><i style="left:89.9px"></i><i style="left:118.8px"></i><pre>            <b class=k>"subtitled"</b>: <b class=n>1</b>,</pre></div>
<div class="ln" style="top:229.4px"><u>269</u><i style="left:61.0px"></i><i style="left:89.9px"></i><i style="left:118.8px"></i><pre>            <b class=k>"hd"</b>: <b class=n>1</b>,</pre></div>
<div class="ln" style="top:247.4px"><u>270</u><i style="left:61.0px"></i><i style="left:89.9px"></i><i style="left:118.8px"></i><pre>            <b class=k>"genre"</b>: [</pre></div>
<div class="ln" style="top:265.5px"><u>271</u><i style="left:61.0px"></i><i style="left:89.9px"></i><i style="left:118.8px"></i><i style="left:147.7px"></i><pre>                <b class=n>16</b></pre></div>
<div class="ln" style="top:283.5px"><u>272</u><i style="left:61.0px"></i><i style="left:89.9px"></i><i style="left:118.8px"></i><pre>            ],</pre></div>
<div class="ln" style="top:301.5px"><u>273</u><i style="left:61.0px"></i><i style="left:89.9px"></i><i style="left:118.8px"></i><pre>            <b class=k>"nextEventId"</b>: <b class=n>853455</b></pre></div>
<div class="ln" style="top:319.5px"><u>274</u><i style="left:61.0px"></i><i style="left:89.9px"></i><pre>        },</pre></div>
<div class="redbg" style="top:337.5px;height:378.7px"></div>
<div class="ln rd" style="top:337.5px"><u>275</u><i style="left:61.0px"></i><i style="left:89.9px"></i><pre>        {</pre></div>
<div class="ln rd" style="top:355.5px"><u>276</u><i style="left:61.0px"></i><i style="left:89.9px"></i><i style="left:118.8px"></i><pre>            <b class=k>"eventId"</b>: <b class=n>899481</b>,</pre></div>
<div class="ln rd" style="top:373.5px"><u>277</u><i style="left:61.0px"></i><i style="left:89.9px"></i><i style="left:118.8px"></i><pre>            <b class=k>"channelName"</b>: <b class=s>"Chérie 25"</b>,</pre></div>
<div class="ln rd" style="top:391.5px"><u>278</u><i style="left:61.0px"></i><i style="left:89.9px"></i><i style="left:118.8px"></i><pre>            <b class=k>"channelUuid"</b>: <b class=s>"6aafc04cc6cce484c32b637aba9e6fea"</b>,</pre></div>
<div class="ln rd" style="top:409.5px"><u>279</u><i style="left:61.0px"></i><i style="left:89.9px"></i><i style="left:118.8px"></i><pre>            <b class=k>"channelNumber"</b>: <b class=s>"25"</b>,</pre></div>
<div class="ln rd" style="top:427.5px"><u>280</u><i style="left:61.0px"></i><i style="left:89.9px"></i><i style="left:118.8px"></i><pre>            <b class=k>"start"</b>: <b class=n>1607521250</b>,</pre></div>
<div class="ln rd" style="top:445.6px"><u>281</u><i style="left:61.0px"></i><i style="left:89.9px"></i><i style="left:118.8px"></i><pre>            <b class=k>"stop"</b>: <b class=n>1607524786</b>,</pre></div>
<div class="ln rd" style="top:463.6px"><u>282</u><i style="left:61.0px"></i><i style="left:89.9px"></i><i style="left:118.8px"></i><pre>            <b class=k>"title"</b>: <b class=s>"CRIMES"</b>,</pre></div>
<div class="ln rd" style="top:481.6px"><u>283</u><i style="left:61.0px"></i><i style="left:89.9px"></i><i style="left:118.8px"></i><pre>            <b class=k>"description"</b>: <b class=s>"« Tragédie chez la nourrice »\nLe 20 mai 2014, Gwenaëlle, une jeune mère, reçoit un appel alarmant de la nourrice</b></pre></div>
<div class="ln rd" style="top:499.6px"><u>284</u><i style="left:61.0px"></i><i style="left:89.9px"></i><pre>        },</pre></div>
<div class="ln rd" style="top:517.6px"><u>285</u><i style="left:61.0px"></i><i style="left:89.9px"></i><pre>        {</pre></div>
<div class="ln rd" style="top:535.6px"><u>286</u><i style="left:61.0px"></i><i style="left:89.9px"></i><i style="left:118.8px"></i><pre>            <b class=k>"eventId"</b>: <b class=n>886238</b>,</pre></div>
<div class="ln rd" style="top:553.6px"><u>287</u><i style="left:61.0px"></i><i style="left:89.9px"></i><i style="left:118.8px"></i><pre>            <b class=k>"channelName"</b>: <b class=s>"TF1 Séries Films"</b>,</pre></div>
<div class="ln rd" style="top:571.6px"><u>288</u><i style="left:61.0px"></i><i style="left:89.9px"></i><i style="left:118.8px"></i><pre>            <b class=k>"channelUuid"</b>: <b class=s>"0e491cb021612d7537fa6d5616715d09"</b>,</pre></div>
<div class="ln rd" style="top:589.6px"><u>289</u><i style="left:61.0px"></i><i style="left:89.9px"></i><i style="left:118.8px"></i><pre>            <b class=k>"channelNumber"</b>: <b class=s>"20"</b>,</pre></div>
<div class="ln rd" style="top:607.6px"><u>290</u><i style="left:61.0px"></i><i style="left:89.9px"></i><i style="left:118.8px"></i><pre>            <b class=k>"start"</b>: <b class=n>1607521500</b>,</pre></div>
<div class="ln rd" style="top:625.6px"><u>291</u><i style="left:61.0px"></i><i style="left:89.9px"></i><i style="left:118.8px"></i><pre>            <b class=k>"stop"</b>: <b class=n>1607524800</b>,</pre></div>
<div class="ln rd" style="top:643.7px"><u>292</u><i style="left:61.0px"></i><i style="left:89.9px"></i><i style="left:118.8px"></i><pre>            <b class=k>"title"</b>: <b class=s>"Grey's anatomy. \"Chacun sa..."</b>,</pre></div>
<div class="ln rd" style="top:661.7px"><u>293</u><i style="left:61.0px"></i><i style="left:89.9px"></i><i style="left:118.8px"></i><pre>            <b class=k>"subtitle"</b>: <b class=s>"Grey's anatomy. \"Chacun sa bulle\" Série (USA). Avec Ellen Pompeo. Linterne de Meredith découvre une tumeur</b></pre></div>
<div class="ln rd" style="top:679.7px"><u>294</u><i style="left:61.0px"></i><i style="left:89.9px"></i><i style="left:118.8px"></i><pre>            <b class=k>"nextEventId"</b>: <b class=n>886239</b></pre></div>
<div class="ln rd" style="top:697.7px"><u>295</u><i style="left:61.0px"></i><i style="left:89.9px"></i><pre>        },</pre></div>
<div class="ln" style="top:715.7px"><u>296</u><i style="left:61.0px"></i><i style="left:89.9px"></i><pre>        {</pre></div>
<div class="ln" style="top:733.7px"><u>297</u><i style="left:61.0px"></i><i style="left:89.9px"></i><i style="left:118.8px"></i><pre>            <b class=k>"eventId"</b>: <b class=n>863561</b>,</pre></div>
<div class="ln" style="top:751.7px"><u>298</u><i style="left:61.0px"></i><i style="left:89.9px"></i><i style="left:118.8px"></i><pre>            <b class=k>"channelName"</b>: <b class=s>"TFX"</b>,</pre></div>
<div class="ln" style="top:769.7px"><u>299</u><i style="left:61.0px"></i><i style="left:89.9px"></i><i style="left:118.8px"></i><pre>            <b class=k>"channelUuid"</b>: <b class=s>"e76638b19d6e68bb3d3371352b69ce14"</b>,</pre></div>
<div class="ln" style="top:787.7px"><u>300</u><i style="left:61.0px"></i><i style="left:89.9px"></i><i style="left:118.8px"></i><pre>            <b class=k>"channelNumber"</b>: <b class=s>"11"</b>,</pre></div>
<div class="ln" style="top:805.8px"><u>301</u><i style="left:61.0px"></i><i style="left:89.9px"></i><i style="left:118.8px"></i><pre>            <b class=k>"start"</b>: <b class=n>1607521500</b>,</pre></div>
<div class="ln" style="top:823.8px"><u>302</u><i style="left:61.0px"></i><i style="left:89.9px"></i><i style="left:118.8px"></i><pre>            <b class=k>"stop"</b>: <b class=n>1607526000</b>,</pre></div>
<div class="ln" style="top:841.8px"><u>303</u><i style="left:61.0px"></i><i style="left:89.9px"></i><i style="left:118.8px"></i><pre>            <b class=k>"title"</b>: <b class=s>"Super Nanny. \"Enceinte de..."</b>,</pre></div>
<div class="ln" style="top:859.8px"><u>304</u><i style="left:61.0px"></i><i style="left:89.9px"></i><i style="left:118.8px"></i><pre>            <b class=k>"subtitle"</b>: <b class=s>"Super Nanny. \"Enceinte de mon 3ème enfant , aidez-moi à retrouver l'autorité à la maison !\" Pas toujours simple</b></pre></div>
<div class="ln" style="top:877.8px"><u>305</u><i style="left:61.0px"></i><i style="left:89.9px"></i><i style="left:118.8px"></i><pre>            <b class=k>"nextEventId"</b>: <b class=n>863620</b></pre></div>
<div class="ln" style="top:895.8px"><u>306</u><i style="left:61.0px"></i><i style="left:89.9px"></i><pre>        },</pre></div>
<div class="ln" style="top:913.8px"><u>307</u><i style="left:61.0px"></i><i style="left:89.9px"></i><pre>        {</pre></div>
<div class="ln" style="top:931.8px"><u>308</u><i style="left:61.0px"></i><i style="left:89.9px"></i><i style="left:118.8px"></i><pre>            <b class=k>"eventId"</b>: <b class=n>896785</b>,</pre></div>
<div class="ln" style="top:949.8px"><u>309</u><i style="left:61.0px"></i><i style="left:89.9px"></i><i style="left:118.8px"></i><pre>            <b class=k>"channelName"</b>: <b class=s>"SRF info HD"</b>,</pre></div>
<div class="ln" style="top:967.8px"><u>310</u><i style="left:61.0px"></i><i style="left:89.9px"></i><i style="left:118.8px"></i><pre>            <b class=k>"channelUuid"</b>: <b class=s>"b0c7ce766aab6e144df272ff6e35fecb"</b>,</pre></div>
<div class="ln" style="top:985.9px"><u>311</u><i style="left:61.0px"></i><i style="left:89.9px"></i><i style="left:118.8px"></i><pre>            <b class=k>"channelNumber"</b>: <b class=s>"75"</b>,</pre></div>
<div class="ln" style="top:1003.9px"><u>312</u><i style="left:61.0px"></i><i style="left:89.9px"></i><i style="left:118.8px"></i><pre>            <b class=k>"start"</b>: <b class=n>1607521500</b>,</pre></div>
<div class="ln" style="top:1021.9px"><u>313</u><i style="left:61.0px"></i><i style="left:89.9px"></i><i style="left:118.8px"></i><pre>            <b class=k>"stop"</b>: <b class=n>1607525100</b>,</pre></div>
<div class="ln" style="top:1039.9px"><u>314</u><i style="left:61.0px"></i><i style="left:89.9px"></i><i style="left:118.8px"></i><pre>            <b class=k>"title"</b>: <b class=s>"Live aus Bern"</b>,</pre></div>
<div class="ln" style="top:1057.9px"><u>315</u><i style="left:61.0px"></i><i style="left:89.9px"></i><i style="left:118.8px"></i><pre>            <b class=k>"subtitle"</b>: <b class=s>"Medienkonferenz des Bundesamts für Gesundheit (BAG)"</b>,</pre></div>
<div class="ln" style="top:1075.9px"><u>316</u><i style="left:61.0px"></i><i style="left:89.9px"></i><i style="left:118.8px"></i><pre>            <b class=k>"widescreen"</b>: <b class=n>1</b>,</pre></div>
 </div>
 <div class="gap" style="left:1017.4px;width:9px"></div>
 <div class="mm" style="left:1026px"><svg width="111" height="1087" viewBox="0 0 111 1087"><rect x="0" y="332" width="111" height="42" fill="#ffd4d4"/><rect x="0" y="426" width="111" height="32" fill="#ffd4d4"/><rect x="0" y="636" width="111" height="30" fill="#ffd4d4"/><rect x="0" y="1070" width="111" height="18" fill="#ffd4d4"/><path d="M12 3h9M12 5h13M12 7h13M12 11h7M12 15h7M12 17h10M12 27h7M12 39h9M12 45h15M12 51h7M12 53h10M12 61h9M12 69h7M12 73h7M12 95h10M12 97h13M12 99h7M12 113h13M12 115h13M12 119h7M12 121h6M12 123h7M12 127h13M12 153h9M12 157h13M12 165h7M12 167h10M12 171h12M12 175h4M12 183h13M12 189h9M12 191h13M12 193h13M12 195h15M12 197h7M12 199h6M12 203h10M12 205h13M12 213h13M12 215h13M12 219h7M12 221h6M12 223h7M12 241h9M12 247h15M12 251h6M12 253h7M12 261h9M12 263h13M12 267h15M12 269h7M12 275h10M12 291h7M12 295h7M12 301h12M12 303h11M12 307h7M12 313h13M12 321h13M12 325h15M12 327h7M12 337h13M12 341h15M12 343h7M12 345h6M12 349h10M12 357h9M12 359h13M12 361h13M12 365h7M12 369h7M12 377h9M12 381h13M12 383h15M12 385h7M12 389h7M12 397h9M12 399h13M12 401h13M12 403h15M12 405h7M12 411h10M12 415h7M12 421h13M12 429h9M12 433h13M12 435h15M12 439h6M12 443h10M12 445h13M12 455h13M12 461h9M12 463h13M12 467h15M12 471h6M12 475h13M12 483h13M12 485h13M12 489h7M12 491h6M12 493h7M12 505h7M12 511h13M12 519h13M12 523h15M12 525h7M12 527h6M12 529h7M12 533h13M12 541h13M12 545h15M12 547h7M12 549h6M12 551h7M12 555h13M12 557h7M12 563h13M12 573h13M12 577h7M12 581h7M12 583h13M12 589h9M12 591h13M12 593h13M12 595h15M12 599h6M12 603h10M12 611h9M12 613h13M12 615h13M12 621h6M12 625h10M12 627h13M12 629h12M12 633h4M12 639h9M12 641h13M12 643h13M12 645h15M12 647h7M12 649h6M12 663h13M12 671h13M12 675h15M12 677h7M12 679h6M12 683h10M12 685h13M12 691h9M12 695h13M12 697h15M12 703h7M12 705h13M12 713h13M12 715h13M12 719h7M12 723h7M12 727h13M12 729h7M12 735h13M12 741h9M12 745h13M12 751h6M12 753h7M12 755h10M12 757h13M12 763h9M12 765h13M12 771h7M12 777h13M12 785h13M12 787h13M12 791h7M12 793h6M12 797h10M12 813h13M12 819h9M12 825h15M12 827h7M12 829h6M12 833h10M12 835h13M12 845h13M12 847h15M12 849h7M12 851h6M12 853h7M12 855h10M12 857h13M12 865h13M12 873h13M12 875h13M12 877h15M12 883h7M12 897h15M12 905h10M12 907h13M12 913h9M12 919h15M12 925h7M12 927h10M12 929h13M12 931h12M12 935h4M12 951h13M12 953h13M12 957h7M12 963h10M12 965h13M12 979h7M12 981h6M12 993h13M12 997h15M12 999h7M12 1003h7M12 1009h7M12 1015h13M12 1023h13M12 1025h13M12 1029h7M12 1031h6M12 1033h7M12 1043h9M12 1045h13M12 1049h15M12 1051h7M12 1055h7M12 1065h13M12 1073h9M12 1075h13M12 1077h13M12 1079h15M12 1081h7M12 1085h7M12 1087h10" stroke="#b83c3c" stroke-width="1.05" stroke-opacity="1.00" fill="none"/><path d="M12 9h15M12 13h6M12 19h13M12 21h12M12 23h11M12 25h4M12 33h13M12 41h13M12 43h13M12 47h7M12 49h6M12 55h13M12 63h13M12 65h13M12 67h15M12 71h6M12 75h13M12 81h9M12 83h13M12 85h13M12 87h15M12 89h7M12 91h6M12 93h7M12 105h13M12 111h9M12 117h15M12 125h10M12 133h9M12 135h13M12 137h13M12 139h15M12 141h7M12 143h6M12 145h7M12 147h13M12 155h13M12 159h15M12 161h7M12 163h6M12 169h13M12 173h11M12 177h7M12 201h7M12 211h9M12 217h15M12 225h10M12 227h13M12 229h7M12 235h13M12 243h13M12 245h13M12 249h7M12 255h13M12 265h13M12 271h6M12 273h7M12 277h13M12 283h9M12 285h13M12 287h13M12 289h15M12 293h6M12 297h10M12 299h13M12 305h4M12 319h9M12 323h13M12 329h6M12 335h9M12 339h13M12 347h7M12 351h13M12 363h15M12 367h6M12 371h10M12 379h13M12 387h6M12 391h13M12 407h6M12 409h7M12 413h13M12 431h13M12 437h7M12 441h7M12 451h9M12 453h13M12 465h13M12 469h7M12 473h7M12 481h9M12 487h15M12 495h10M12 497h13M12 499h12M12 501h11M12 503h4M12 517h9M12 521h13M12 531h10M12 539h9M12 543h13M12 553h10M12 569h9M12 571h13M12 575h15M12 579h6M12 597h7M12 601h7M12 605h13M12 617h15M12 619h7M12 623h7M12 631h11M12 651h7M12 653h10M12 655h13M12 661h9M12 669h9M12 673h13M12 681h7M12 693h13M12 699h7M12 701h6M12 711h9M12 717h15M12 721h6M12 725h10M12 743h13M12 747h15M12 749h7M12 767h13M12 769h15M12 773h6M12 775h7M12 783h9M12 789h15M12 795h7M12 799h13M12 801h12M12 803h11M12 805h4M12 807h7M12 821h13M12 823h13M12 831h7M12 841h9M12 843h13M12 859h7M12 871h9M12 879h7M12 881h6M12 885h13M12 891h9M12 893h13M12 895h13M12 899h7M12 901h6M12 903h7M12 915h13M12 917h13M12 921h7M12 923h6M12 933h11M12 937h7M12 943h13M12 949h9M12 955h15M12 959h6M12 961h7M12 971h9M12 973h13M12 975h13M12 977h15M12 983h7M12 985h13M12 991h9M12 995h13M12 1001h6M12 1005h10M12 1007h13M12 1021h9M12 1027h15M12 1035h10M12 1037h13M12 1047h13M12 1053h6M12 1057h13M12 1063h9M12 1067h13M12 1083h6" stroke="#b83c3c" stroke-width="1.05" stroke-opacity="0.61" fill="none"/><path d="M27 5h11M27 7h34M21 15h25M24 17h28M29 45h4M21 51h35M24 53h3M28 53h8M37 53h8M46 53h3M50 53h8M59 53h2M62 53h7M70 53h5M76 53h6M83 53h6M90 53h8M99 53h4M104 53h7M21 73h34M24 95h28M27 97h5M33 97h6M40 97h3M44 97h4M49 97h3M53 97h5M59 97h8M68 97h4M73 97h4M78 97h6M85 97h6M92 97h8M101 97h6M108 97h3M27 113h7M27 115h34M21 123h13M27 157h34M21 165h22M24 167h20M27 191h12M27 193h34M29 195h4M24 203h36M27 213h9M27 215h34M21 223h8M29 247h4M21 253h31M27 263h14M29 267h4M24 275h28M21 295h40M27 321h15M29 325h4M27 337h11M29 341h4M24 349h8M33 349h7M41 349h8M50 349h6M57 349h2M60 349h6M67 349h6M74 349h7M82 349h9M92 349h8M101 349h7M109 349h2M27 359h12M27 361h34M21 369h33M27 381h34M29 383h4M21 389h12M27 399h8M27 401h34M29 403h4M24 411h28M27 433h34M29 435h4M24 443h2M27 443h7M35 443h4M40 443h3M44 443h6M51 443h9M61 443h9M71 443h6M78 443h2M81 443h2M84 443h2M87 443h2M90 443h2M93 443h3M97 443h8M106 443h5M27 455h34M27 463h10M29 467h4M27 475h9M37 475h6M44 475h7M52 475h6M59 475h6M66 475h2M69 475h7M77 475h2M80 475h4M85 475h6M92 475h8M101 475h5M107 475h4M27 483h6M27 485h34M21 493h21M27 519h11M29 523h4M21 529h17M27 541h10M29 545h4M21 551h31M27 555h2M30 555h2M33 555h2M36 555h7M44 555h9M54 555h9M64 555h3M68 555h8M77 555h3M81 555h3M85 555h6M92 555h7M100 555h5M106 555h3M110 555h1M27 573h34M21 581h15M27 583h9M37 583h2M40 583h3M44 583h4M49 583h7M57 583h2M60 583h5M66 583h6M73 583h9M83 583h3M87 583h9M97 583h7M105 583h6M27 591h18M27 593h34M29 595h4M24 603h2M27 603h4M32 603h5M38 603h3M42 603h7M50 603h4M55 603h9M65 603h3M69 603h8M78 603h2M81 603h3M85 603h9M95 603h7M103 603h7M27 613h12M27 615h34M24 625h36M27 627h4M32 627h2M35 627h6M42 627h6M49 627h7M57 627h4M62 627h6M69 627h9M79 627h3M83 627h7M91 627h9M101 627h9M27 641h7M27 643h34M29 645h4M27 663h12M27 671h13M29 675h4M24 683h28M27 695h34M29 697h4M21 703h31M27 705h3M31 705h9M41 705h6M48 705h4M53 705h5M59 705h4M64 705h5M70 705h6M77 705h5M83 705h2M86 705h3M90 705h8M99 705h2M102 705h7M110 705h1M27 713h7M27 715h34M21 723h9M27 727h3M31 727h9M41 727h9M51 727h2M54 727h4M59 727h2M62 727h5M68 727h3M72 727h5M78 727h4M83 727h4M88 727h3M92 727h6M99 727h6M106 727h2M109 727h2M27 745h34M21 753h13M24 755h36M27 765h13M27 777h2M30 777h8M39 777h8M48 777h2M51 777h8M60 777h2M63 777h7M71 777h7M79 777h8M88 777h5M94 777h7M102 777h8M27 785h7M27 787h34M24 797h28M29 825h4M24 833h36M27 845h34M29 847h4M21 853h22M24 855h4M29 855h6M36 855h8M45 855h6M52 855h6M59 855h5M65 855h3M69 855h6M76 855h9M86 855h5M92 855h8M101 855h5M107 855h4M27 857h6M34 857h9M44 857h9M54 857h6M61 857h2M64 857h5M70 857h7M78 857h5M84 857h5M90 857h8M99 857h8M108 857h2M27 873h17M27 875h34M29 877h4M21 883h20M29 897h4M24 905h3M28 905h2M31 905h8M40 905h3M44 905h9M54 905h8M63 905h4M68 905h8M77 905h6M84 905h3M88 905h8M97 905h9M107 905h4M29 919h4M21 925h22M24 927h28M27 929h4M32 929h8M41 929h8M50 929h5M56 929h3M60 929h7M68 929h7M76 929h5M82 929h7M90 929h5M96 929h8M105 929h2M108 929h2M27 951h13M27 953h34M24 963h36M27 993h5M29 997h4M21 1003h25M27 1023h9M27 1025h34M21 1033h20M27 1045h10M29 1049h4M21 1055h36M27 1065h17M27 1075h8M27 1077h34M29 1079h4M21 1085h14M24 1087h28" stroke="#2f6bb5" stroke-width="1.05" stroke-opacity="1.00" fill="none"/><path d="M29 9h4M27 19h3M31 19h6M38 19h4M43 19h8M52 19h2M55 19h5M61 19h6M68 19h2M71 19h2M74 19h7M82 19h9M92 19h3M96 19h9M106 19h4M27 41h18M27 43h34M27 63h9M27 65h34M29 67h4M27 75h9M37 75h7M45 75h4M50 75h9M60 75h9M70 75h6M77 75h5M83 75h4M88 75h7M96 75h9M106 75h5M27 83h10M27 85h34M29 87h4M21 93h32M29 117h4M24 125h28M27 135h7M27 137h34M29 139h4M21 145h22M27 147h5M33 147h4M38 147h3M42 147h9M52 147h8M61 147h7M69 147h6M76 147h3M80 147h8M89 147h5M95 147h8M104 147h4M109 147h2M27 155h15M29 159h4M27 169h3M31 169h2M34 169h6M41 169h5M47 169h4M52 169h5M58 169h7M66 169h3M70 169h9M80 169h5M86 169h9M96 169h2M99 169h7M107 169h4M21 201h19M29 217h4M24 225h28M27 227h5M33 227h9M43 227h5M49 227h4M54 227h7M62 227h8M71 227h9M81 227h6M88 227h4M93 227h9M103 227h7M27 243h11M27 245h34M27 255h3M31 255h7M39 255h4M44 255h6M51 255h8M60 255h2M63 255h3M67 255h7M75 255h4M80 255h7M88 255h2M91 255h2M94 255h5M100 255h3M104 255h6M27 265h34M21 273h28M27 285h16M27 287h34M29 289h4M24 297h9M34 297h3M38 297h3M42 297h6M49 297h8M58 297h5M64 297h4M69 297h9M79 297h9M89 297h2M92 297h9M102 297h9M27 299h9M37 299h5M43 299h9M53 299h4M58 299h2M61 299h4M66 299h7M74 299h9M84 299h9M94 299h6M101 299h9M27 323h34M27 339h34M21 347h33M29 363h4M24 371h20M27 379h8M27 391h2M30 391h8M39 391h4M44 391h3M48 391h5M54 391h2M57 391h9M67 391h4M72 391h3M76 391h4M81 391h2M84 391h8M93 391h3M97 391h2M100 391h7M108 391h3M21 409h36M27 413h2M30 413h3M34 413h8M43 413h8M52 413h9M62 413h3M66 413h2M69 413h8M78 413h4M83 413h9M93 413h8M102 413h3M106 413h3M110 413h1M27 431h6M21 441h8M27 453h13M27 465h34M21 473h9M29 487h4M24 495h2M27 495h6M34 495h4M39 495h4M44 495h6M51 495h9M61 495h7M69 495h3M73 495h9M83 495h8M92 495h5M98 495h5M104 495h6M27 497h8M36 497h9M46 497h5M52 497h6M59 497h2M62 497h8M71 497h9M81 497h3M85 497h7M93 497h3M97 497h5M103 497h8M27 521h34M24 531h36M27 543h34M24 553h9M34 553h5M40 553h6M47 553h6M54 553h8M63 553h3M67 553h9M77 553h4M82 553h6M89 553h2M92 553h7M100 553h5M106 553h4M27 571h6M29 575h4M21 601h39M29 617h4M21 623h38M21 651h14M24 653h36M27 673h34M21 681h9M27 693h13M29 717h4M24 725h7M32 725h2M35 725h4M40 725h7M48 725h2M51 725h7M59 725h9M69 725h3M73 725h3M77 725h7M85 725h5M91 725h7M99 725h8M108 725h2M27 743h9M29 747h4M27 767h34M29 769h4M21 775h31M29 789h4M21 795h30M27 799h2M30 799h7M38 799h3M42 799h4M47 799h3M51 799h7M59 799h8M68 799h5M74 799h2M77 799h5M83 799h4M88 799h8M97 799h8M106 799h5M27 821h13M27 823h34M21 831h40M27 843h15M27 885h8M36 885h9M46 885h7M54 885h3M58 885h5M64 885h4M69 885h8M78 885h7M86 885h7M94 885h4M99 885h5M105 885h6M27 893h17M27 895h34M21 903h23M27 915h16M27 917h34M29 955h4M21 961h39M27 973h16M27 975h34M29 977h4M21 983h9M27 985h7M35 985h3M39 985h4M44 985h7M52 985h7M60 985h7M68 985h3M72 985h6M79 985h4M84 985h3M88 985h6M95 985h7M103 985h8M27 995h34M24 1005h2M27 1005h8M36 1005h2M39 1005h2M42 1005h6M49 1005h2M52 1005h6M59 1005h8M68 1005h3M72 1005h2M75 1005h2M78 1005h5M84 1005h4M89 1005h9M99 1005h6M106 1005h4M27 1007h8M36 1007h3M40 1007h4M45 1007h4M50 1007h3M54 1007h2M57 1007h3M61 1007h3M65 1007h4M70 1007h9M80 1007h9M90 1007h8M99 1007h2M102 1007h2M105 1007h6M29 1027h4M24 1035h2M27 1035h9M37 1035h2M40 1035h5M46 1035h5M52 1035h5M58 1035h2M61 1035h4M66 1035h4M71 1035h7M79 1035h2M82 1035h9M92 1035h6M99 1035h8M108 1035h3M27 1047h34M27 1057h5M33 1057h3M37 1057h4M42 1057h4M47 1057h7M55 1057h8M64 1057h4M69 1057h2M72 1057h6M79 1057h8M88 1057h7M96 1057h3M100 1057h7M108 1057h3M27 1067h34" stroke="#2f6bb5" stroke-width="1.05" stroke-opacity="0.61" fill="none"/><path d="M23 3h6M21 11h10M23 39h6M23 61h6M21 69h10M21 119h10M20 121h10M27 127h6M23 153h6M26 171h1M18 175h1M16 179h2M27 183h6M23 189h6M21 197h10M20 199h10M27 205h6M21 219h10M20 221h10M16 231h2M23 241h6M20 251h10M23 261h6M21 269h10M21 291h10M26 301h1M25 303h1M27 313h6M21 327h10M21 343h10M20 345h10M23 357h6M21 365h10M23 377h6M21 385h10M23 397h6M21 405h10M16 417h2M27 421h6M23 429h6M20 439h10M27 445h6M23 461h6M20 471h10M21 489h10M20 491h10M16 507h2M27 511h6M21 525h10M20 527h10M27 533h6M21 547h10M20 549h10M27 563h6M21 577h10M23 589h6M20 599h10M23 611h6M20 621h10M26 629h1M18 633h1M23 639h6M21 647h10M20 649h10M21 677h10M20 679h10M27 685h6M23 691h6M21 719h10M27 735h6M23 741h6M20 751h10M27 757h6M23 763h6M21 771h10M21 791h10M20 793h10M16 809h2M27 813h6M23 819h6M21 827h10M20 829h10M27 835h6M21 849h10M20 851h10M16 861h2M27 865h6M27 907h6M23 913h6M26 931h1M18 935h1M21 957h10M27 965h6M21 979h10M20 981h10M21 999h10M16 1011h2M27 1015h6M21 1029h10M20 1031h10M23 1043h6M21 1051h10M23 1073h6M21 1081h10" stroke="#2f9a70" stroke-width="1.05" stroke-opacity="1.00" fill="none"/><path d="M20 13h10M26 21h1M25 23h1M18 25h1M16 29h2M27 33h6M21 47h10M20 49h10M27 55h6M20 71h10M23 81h6M21 89h10M20 91h10M16 101h2M27 105h6M23 111h6M23 133h6M21 141h10M20 143h10M21 161h10M20 163h10M25 173h1M23 211h6M27 235h6M21 249h10M20 271h10M27 277h6M23 283h6M20 293h10M18 305h1M16 309h2M23 319h6M20 329h10M23 335h6M27 351h6M20 367h10M20 387h10M20 407h10M21 437h10M23 451h6M21 469h10M23 481h6M26 499h1M25 501h1M18 503h1M23 517h6M23 539h6M16 559h2M23 569h6M20 579h10M21 597h10M27 605h6M21 619h10M25 631h1M27 655h6M23 661h6M23 669h6M21 699h10M20 701h10M23 711h6M20 721h10M16 731h2M21 749h10M20 773h10M23 783h6M26 801h1M25 803h1M18 805h1M23 841h6M23 871h6M21 879h10M20 881h10M23 891h6M21 899h10M20 901h10M21 921h10M20 923h10M25 933h1M16 939h2M27 943h6M23 949h6M20 959h10M23 971h6M23 991h6M20 1001h10M23 1021h6M27 1037h6M20 1053h10M23 1063h6M20 1083h10" stroke="#2f9a70" stroke-width="1.05" stroke-opacity="0.65" fill="none"/><path d="M21 27h1M12 31h2M8 37h1M8 77h2M8 79h1M21 99h1M12 103h2M8 107h2M8 109h1M8 129h2M8 151h1M8 187h1M8 207h2M8 257h2M8 259h1M21 307h1M8 331h2M8 353h2M8 355h1M8 373h2M21 415h1M12 419h2M8 425h2M8 477h2M8 479h1M21 505h1M8 513h2M8 515h1M8 535h2M21 557h1M12 561h2M8 567h1M8 585h2M8 587h1M8 607h2M8 657h2M8 659h1M8 667h1M8 687h2M8 707h2M21 729h1M12 733h2M8 759h2M8 761h1M8 817h1M8 839h1M8 867h2M8 869h1M8 889h1M8 909h2M8 911h1M12 941h2M8 945h2M8 947h1M8 967h2M8 969h1M8 989h1M21 1009h1M12 1013h2M8 1039h2M8 1059h2M8 1071h1" stroke="#666666" stroke-width="1.05" stroke-opacity="0.83" fill="none"/><path d="M8 1h1M8 35h2M8 57h2M8 59h1M8 131h1M8 149h2M21 177h1M12 181h2M8 185h2M8 209h1M21 229h1M12 233h2M8 237h2M8 239h1M8 279h2M8 281h1M12 311h2M8 315h2M8 317h1M8 333h1M8 375h1M8 393h2M8 395h1M8 423h2M8 427h1M8 447h2M8 449h1M8 457h2M8 459h1M12 509h2M8 537h1M8 565h2M8 609h1M8 635h2M8 637h1M8 665h2M8 689h1M8 709h1M8 737h2M8 739h1M8 779h2M8 781h1M21 807h1M12 811h2M8 815h2M8 837h2M21 859h1M12 863h2M8 887h2M21 937h1M8 987h2M8 1017h2M8 1019h1M8 1041h1M8 1061h1M8 1069h2" stroke="#666666" stroke-width="1.05" stroke-opacity="0.50" fill="none"/><path d="M0 333h9M0 335h29M0 337h38M0 339h61M0 341h33M0 343h31M0 345h30M0 347h54M0 349h111M0 351h33M0 353h10M0 355h9M0 357h29M0 359h39M0 361h61M0 363h33M0 365h31M0 367h30M0 369h54M0 371h44M0 373h10M0 427h9M0 429h29M0 431h33M0 433h61M0 435h33M0 437h31M0 439h30M0 441h29M0 443h111M0 445h33M0 447h10M0 449h9M0 451h29M0 453h40M0 455h61M0 457h10M0 637h9M0 639h29M0 641h34M0 643h61M0 645h33M0 647h31M0 649h30M0 651h35M0 653h60M0 655h33M0 657h10M0 659h9M0 661h29M0 663h39M0 665h10M0 1071h9M0 1073h29M0 1075h35M0 1077h61M0 1079h33M0 1081h31M0 1083h30M0 1085h35M0 1087h52" stroke="#ff3030" stroke-width="2" stroke-opacity="0.72" fill="none"/></svg></div>
 <div class="rul" style="left:1137px"><i style="top:77.8px;height:19.9px;background:#ffa3a3"></i><i style="top:330.8px;height:22.0px;background:#ffa3a3"></i><i style="top:385.8px;height:18.6px;background:#ffa3a3"></i><i style="top:510.2px;height:21.2px;background:#ffa3a3"></i><i style="top:771.5px;height:22.2px;background:#ffa3a3"></i><i style="top:808.1px;height:17.3px;background:#ffa3a3"></i><i style="top:879.2px;height:132.4px;background:#e3ead3"></i><i class="sq" style="top:1012.3px"></i></div>
</div>
<div class="split"></div>
<div class="foot" style="left:256px;width:1152px">Compare: Raw DeltaJSON - 15 Changes</div>
<div class="foot" style="left:1408px;width:1152px">DiffReport - 15 Changes</div>
<svg width="14" height="12" viewBox="0 0 14 12" style="left:1393px;top:1196px"><path d="M1 12L13 0M7 12L13 6" stroke="#6a6a6a" stroke-width="1.6" fill="none"/></svg>
<div class="topg"></div><div class="topb"></div><div class="leftg"></div>
</div>
</body></html>
